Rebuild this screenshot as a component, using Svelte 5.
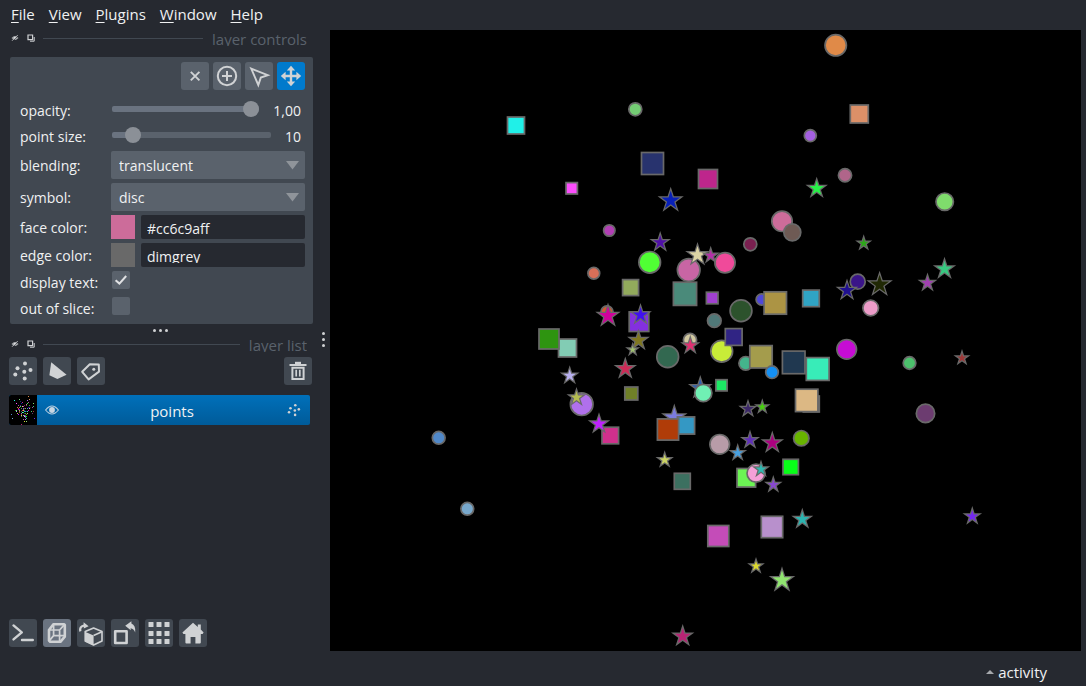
<script>
  let opacity = $state(100);
  let pointSize = $state(10);
  let blending = $state('translucent');
  let symbol = $state('disc');
  let faceColor = $state('#cc6c9aff');
  let edgeColor = $state('dimgrey');
  let displayText = $state(true);
  let outOfSlice = $state(false);

  const menus = ['File', 'View', 'Plugins', 'Window', 'Help'];

  // [shape, centre x, centre y, outer radius, face colour], in paint order
  const points = [
    ['s', 516, 125.5, 9.5, '#20f0e8'], ['c', 635.3, 109.3, 7.5, '#74cc74'],
    ['s', 652.5, 163.5, 12, '#28336e'], ['s', 571.7, 188.3, 6.7, '#fb4dfb'],
    ['t', 670.7, 200.5, 13.8, '#0820b8'], ['c', 609.3, 230.5, 6.7, '#b23fb5'],
    ['t', 660.2, 242.5, 11.4, '#5010a8'], ['c', 835.7, 45.3, 11.7, '#e08a48'],
    ['s', 859.3, 114, 10, '#dc9068'], ['c', 810.3, 135.7, 7, '#a45fe0'],
    ['s', 708, 179, 10.5, '#be268c'], ['t', 816.7, 188.5, 11.8, '#28f048'],
    ['c', 845, 175.3, 7.6, '#b0658a'], ['c', 944.7, 201.7, 9.7, '#7fdc6c'],
    ['c', 782, 221.3, 11.2, '#cc6c9a'], ['c', 792.3, 232.3, 9.5, '#6e5a54'],
    ['c', 750.3, 244.3, 7.5, '#7a2050'], ['t', 863.7, 243.3, 9, '#2ca818'],
    ['c', 649.7, 262.3, 11.8, '#50ff34'], ['c', 593.8, 273.3, 6.9, '#d86f58'],
    ['s', 630.6, 287.6, 9, '#92aa5c'], ['c', 688.7, 270, 12.3, '#c865a4'],
    ['c', 725, 262.7, 11.1, '#f04a9a'], ['t', 697.5, 255, 13, '#dcd4a4'],
    ['t', 710.7, 255.6, 9.8, '#b430a8'], ['s', 685, 293.8, 12.6, '#4a8a7a'],
    ['s', 712.2, 298, 6.8, '#a040d0'], ['c', 607, 311.8, 7, '#d85830'],
    ['t', 608, 316, 13.4, '#d0009c'], ['s', 639, 321.7, 10.8, '#8430e0'],
    ['t', 640.5, 315, 12, '#4010f0'], ['t', 638.5, 340.5, 12, '#807820'],
    ['t', 632.7, 349.8, 8, '#a0c070'], ['c', 690, 340, 7.6, '#d0c8a0'],
    ['t', 690.3, 345.5, 10.7, '#e03070'], ['c', 667.7, 356.7, 11.9, '#326850'],
    ['c', 714.3, 320.7, 7.8, '#507878'], ['s', 567.5, 348, 10, '#82ccb4'],
    ['s', 549, 339, 11, '#2e9410'], ['t', 625.3, 368.7, 12.3, '#cc2c58'],
    ['t', 569.7, 375.7, 10.5, '#b8b0f0'], ['c', 741, 310.7, 11.9, '#2c522c'],
    ['c', 761.7, 299.5, 6.6, '#5048d8'], ['s', 775.3, 303, 12.2, '#ac9444'],
    ['s', 811, 298.4, 9.3, '#30a4c4'], ['c', 857.7, 281.7, 8.5, '#3a1488'],
    ['t', 847, 290.5, 12, '#201090'], ['t', 879.6, 284.7, 14, '#202804'],
    ['c', 870.7, 308, 8.8, '#ec9cc8'], ['c', 721.7, 351.2, 11.9, '#c8ec38'],
    ['s', 733.7, 337, 9.4, '#302484'], ['c', 745.7, 363.3, 7.8, '#44b48c'],
    ['s', 761, 356.8, 12.2, '#a49c4c'], ['c', 772, 372.2, 7.3, '#1490f4'],
    ['s', 793.7, 362.4, 12.3, '#203850'], ['s', 817.7, 369, 12.4, '#38ecb8'],
    ['c', 846.7, 349.3, 10.8, '#c60cd4'], ['t', 944.5, 269, 12.3, '#38c880'],
    ['t', 927.5, 283, 10.5, '#a040b0'], ['t', 962, 358, 9, '#a03838'],
    ['c', 909.5, 363, 7.3, '#4cc06c'], ['c', 925.5, 413.4, 10.2, '#6c3c70'],
    ['c', 581.7, 404.2, 12.3, '#b070ec'], ['t', 576.5, 397.6, 10.5, '#b4bc50'],
    ['s', 631.3, 393.5, 7.5, '#708028'], ['t', 700.3, 388, 13, '#3060b0'],
    ['c', 703.3, 393, 9.6, '#70f0b4'], ['s', 721.5, 385.3, 6.6, '#1ce864'],
    ['s', 610.3, 435.5, 9.3, '#d0308c'], ['t', 599, 424, 11.8, '#c020ff'],
    ['t', 674.3, 417.5, 14, '#7c7ce0'], ['s', 686, 425.5, 9.6, '#3498c4'],
    ['s', 668, 429.5, 11.6, '#b03c08'], ['t', 664.7, 460, 9.7, '#ccd464'],
    ['s', 682.3, 481.3, 9, '#3c7060'], ['t', 748, 409, 10.2, '#3c2868'],
    ['t', 762.3, 407, 8.8, '#48d010'], ['s', 811.3, 404, 9, '#806070'],
    ['s', 806.7, 400.4, 12.2, '#dcb884'], ['c', 719.7, 444.3, 10.8, '#b89ca8'],
    ['t', 750, 440.2, 10.6, '#6030b8'], ['t', 772.3, 443, 12.4, '#ac0080'],
    ['c', 801.3, 438.2, 8.7, '#68b400'], ['t', 737.7, 453, 10, '#48a0e0'],
    ['s', 746.3, 477.8, 10.3, '#6cf454'], ['c', 756, 473.2, 10, '#f4a0d8'],
    ['t', 761, 469.3, 9.8, '#30b8b0'], ['s', 790.7, 467, 8.7, '#08ff18'],
    ['t', 773.3, 484.8, 9.8, '#8848d0'], ['s', 718.3, 536, 11.5, '#c44cb8'],
    ['s', 772, 527, 11.7, '#b890cc'], ['t', 802.3, 519.3, 11.6, '#2cb4b0'],
    ['t', 972.3, 516.4, 10.3, '#7428f0'], ['t', 756, 566.2, 9.3, '#dcd830'],
    ['t', 782, 580.3, 14, '#90e470'], ['t', 682.7, 636.4, 12.3, '#b82474'],
    ['c', 438.7, 437.8, 7.4, '#5088c8'], ['c', 467.3, 508.8, 7.4, '#78a8cc']
  ];

  function star(cx, cy, r) {
    const out = [];
    for (let i = 0; i < 10; i++) {
      const a = -Math.PI / 2 + (i * Math.PI) / 5;
      const k = i % 2 ? r * 0.382 : r;
      out.push((cx + k * Math.cos(a)).toFixed(2) + ',' + (cy + k * Math.sin(a)).toFixed(2));
    }
    return out.join(' ');
  }
  const core = (r) => r - 4;
</script>

{#snippet dockTitle(text)}
  <header class="dock-title">
    <button class="mini" aria-label="hide {text}">
      <svg width="8" height="8" viewBox="0 0 8 8"><path d="M.5 4Q4 .2 7.5 4Q4 7.8 .5 4Z" fill="#a4a7ab" /><circle cx="4" cy="4" r="1.2" fill="#e0e1e3" /><path d="M1.6 7.2L7.2 1.6" stroke="#262930" stroke-width=".8" /><path d="M1 6.8L6.8 1" stroke="#d0d2d4" stroke-width=".8" /></svg>
    </button>
    <button class="mini" aria-label="float {text}">
      <svg width="8" height="8" viewBox="0 0 8 8" fill="none" stroke="#d0d2d4"><path d="M1 1H5.6V5.6H1Z" stroke-width="1.2" /><path d="M3 7.2H7.2V3" /></svg>
    </button>
    <span class="rule"></span>
    <h2>{text}</h2>
  </header>
{/snippet}

{#snippet dots()}
  <g fill="#d0d2d4"><circle cx="16" cy="6.5" r="2" /><circle cx="8.5" cy="11.2" r="2" /><circle cx="6.3" cy="17.4" r="2" /><circle cx="15.3" cy="14.7" r="2" /><circle cx="21.5" cy="13" r="2" /><circle cx="15.7" cy="21.6" r="2" /></g>
{/snippet}

<div class="app">
  <nav class="menubar">
    {#each menus as m}<button><u>{m[0]}</u>{m.slice(1)}</button>{/each}
  </nav>

  <div class="main">
    <aside>
      {@render dockTitle('layer controls')}
      <section class="controls">
        <div class="modes">
          <button class="tool" aria-label="delete selected points"><svg viewBox="0 0 28 28"><path d="M9.8 9.8L18.4 18.4M18.4 9.8L9.8 18.4" stroke="#d0d2d4" stroke-width="1.9" /></svg></button>
          <button class="tool" aria-label="add points"><svg viewBox="0 0 28 28" fill="none" stroke="#d0d2d4" stroke-width="2"><circle cx="14" cy="14" r="9.2" /><path d="M14 9V19M9 14H19" /></svg></button>
          <button class="tool" aria-label="select points"><svg viewBox="0 0 28 28" fill="none" stroke="#d0d2d4" stroke-width="1.9"><path d="M6.2 6.6L22.8 13.2L15.8 15.6L13.3 23Z" /></svg></button>
          <button class="tool on" aria-label="pan and zoom"><svg viewBox="0 0 28 28"><path d="M14 6V22M6 14H22" stroke="#d0d2d4" stroke-width="2.4" /><path d="M14 3.8L18.2 8.6H9.8ZM14 24.2L9.8 19.4H18.2ZM3.8 14L8.6 9.8V18.2ZM24.2 14L19.4 18.2V9.8Z" fill="#d0d2d4" /></svg></button>
        </div>
        <div class="form">
          <label for="opacity">opacity:</label>
          <div class="range">
            <input id="opacity" type="range" min="0" max="100" bind:value={opacity} style="--fill: {opacity}%" />
            <output for="opacity">{(opacity / 100).toFixed(2).replace('.', ',')}</output>
          </div>
          <label for="size">point size:</label>
          <div class="range">
            <input id="size" type="range" min="1" max="100" bind:value={pointSize} style="--fill: {pointSize}%" />
            <output for="size">{pointSize}</output>
          </div>
          <label for="blending">blending:</label>
          <div class="combo">
            <select id="blending" bind:value={blending}><option>translucent</option><option>additive</option><option>opaque</option></select>
            <svg width="13" height="9" viewBox="0 0 13 9"><path d="M0 0H13L6.5 8.5Z" /></svg>
          </div>
          <label for="symbol">symbol:</label>
          <div class="combo">
            <select id="symbol" bind:value={symbol}><option>disc</option><option>square</option><option>star</option></select>
            <svg width="13" height="9" viewBox="0 0 13 9"><path d="M0 0H13L6.5 8.5Z" /></svg>
          </div>
          <label for="face">face color:</label>
          <div class="color"><span class="swatch face"></span><span class="field"><input id="face" type="text" bind:value={faceColor} /></span></div>
          <label for="edge">edge color:</label>
          <div class="color"><span class="swatch edge"></span><span class="field"><input id="edge" type="text" bind:value={edgeColor} /></span></div>
          <label for="text">display text:</label>
          <div class="check">
            <input id="text" type="checkbox" bind:checked={displayText} />
            <svg viewBox="0 0 18 18"><path d="M3.6 9.2L7.4 12.6L14.2 5" fill="none" stroke="#e0e1e3" stroke-width="2" /></svg>
          </div>
          <label for="slice">out of slice:</label>
          <div class="check">
            <input id="slice" type="checkbox" bind:checked={outOfSlice} />
            <svg viewBox="0 0 18 18"><path d="M3.6 9.2L7.4 12.6L14.2 5" fill="none" stroke="#e0e1e3" stroke-width="2" /></svg>
          </div>
        </div>
      </section>
      <div class="hsplit"><i></i><i></i><i></i></div>

      {@render dockTitle('layer list')}
      <div class="toolbar list-tools">
        <button class="tool" aria-label="new points layer"><svg viewBox="0 0 28 28">{@render dots()}</svg></button>
        <button class="tool" aria-label="new shapes layer"><svg viewBox="0 0 28 28"><path d="M8.2 5.2L23.6 17.8L14.4 22L6.4 18.2Z" fill="#d0d2d4" /></svg></button>
        <button class="tool" aria-label="new labels layer"><svg viewBox="0 0 28 28"><path d="M12.8 7.2L21.8 7.6L22 14.6L11.6 22.4L5.2 14.8Z" fill="none" stroke="#d0d2d4" stroke-width="2" stroke-linejoin="round" /><circle cx="16.8" cy="12.2" r="1.5" fill="#d0d2d4" /></svg></button>
        <button class="tool end" aria-label="delete layer"><svg viewBox="0 0 28 28" fill="none" stroke="#d0d2d4"><path d="M5.5 8H22.5" stroke-width="2" /><path d="M11 6H17" stroke-width="2.4" /><path d="M8.4 10.8H19.6V22H8.4Z" stroke-width="2" /><path d="M12.2 12.8V19.6M15.8 12.8V19.6" stroke-width="1.7" /></svg></button>
      </div>
      <div class="layer">
        <svg class="thumb" viewBox="0 0 28 30" shape-rendering="crispEdges">
          {#each points as [, x, y, , fill]}
            <rect x={Math.round((x - 400) / 23)} y={Math.round((y - 30) / 21)} width="1" height="1" {fill} />
          {/each}
        </svg>
        <button class="eye" aria-label="toggle visibility"><svg width="14" height="10" viewBox="0 0 14 10"><path d="M.6 5Q7-3 13.4 5Q7 13 .6 5Z" fill="none" stroke="#b9cfe0" stroke-width="1.1" /><circle cx="7" cy="5" r="2.9" fill="#c8d6e2" /></svg></button>
        <span class="name">points</span>
        <svg class="kind" viewBox="0 0 28 28">{@render dots()}</svg>
      </div>

      <div class="toolbar viewer">
        <button class="tool" aria-label="console"><svg viewBox="0 0 28 28" fill="none" stroke="#d0d2d4" stroke-width="2.4" stroke-linecap="round" stroke-linejoin="round"><path d="M4.5 6.4L12.8 13.4L4.5 20.4M13 21H23.8" /></svg></button>
        <button class="tool lit" aria-label="3D view"><svg viewBox="0 0 28 28" fill="none" stroke="#d0d2d4" stroke-linejoin="round"><path d="M10.4 5.2H21.2L21.8 6V17.6L17.4 22.8H7.2L6 21.6V11Z" stroke-width="2.6" /><path d="M6.2 11H16.6V22.4M16.6 11L21.4 5.6M10.6 5.4V16.6H21.8M10.6 16.6L6.4 21.6" stroke-width="1.7" /></svg></button>
        <button class="tool" aria-label="roll axes"><svg viewBox="0 0 28 28"><path d="M8.2 12.6L16.6 9L25 12.6V22L16.6 26L8.2 22Z" fill="none" stroke="#d0d2d4" stroke-width="1.6" stroke-linejoin="round" /><path d="M8 12.8L16.6 16.4V26.4L8 22.4Z" fill="#d0d2d4" /><path d="M16.6 16.4L25 12.8" stroke="#d0d2d4" stroke-width="1.6" /><path d="M2.2 12.8Q1 6.8 6.6 5.6V3.2L11.6 7.2L6.8 9.4V7.8Q3.8 8.4 4.4 12Z" fill="#d0d2d4" /></svg></button>
        <button class="tool" aria-label="transpose axes"><svg viewBox="0 0 28 28"><path d="M4.2 12.2H15.6V24H4.2Z" fill="none" stroke="#d0d2d4" stroke-width="2.6" stroke-linejoin="round" /><path d="M14.2 6.8L20.4 2.2V4.6Q24.8 6.2 24.2 13.4Q22.8 9.6 19.6 9.2L19.8 11.2Z" fill="#d0d2d4" /></svg></button>
        <button class="tool" aria-label="grid mode"><svg viewBox="0 0 28 28" fill="#d0d2d4">{#each [3, 11, 19] as gx}{#each [3, 12, 20] as gy}<rect x={gx + 0.5} y={gy} width="5" height="5" rx=".6" />{/each}{/each}</svg></button>
        <button class="tool" aria-label="home"><svg viewBox="0 0 28 28"><path d="M14 3.8L18.8 8V5.4H21.8V10.6L24.6 13.4L23.6 15H21.8V23.6Q21.8 24.6 20.8 24.6H16.4V18H11.6V24.6H7.4Q6.4 24.6 6.4 23.6V15H4.4L3.4 13.4Z" fill="#d0d2d4" /></svg></button>
      </div>
    </aside>

    <div class="vsplit"><i></i><i></i><i></i></div>

    <main>
      <svg class="canvas" viewBox="330 30 751 621" role="img" aria-label="points layer">
        {#each points as [shape, x, y, r, fill]}
          {#if shape === 'c'}
            <circle cx={x} cy={y} r={r - 1} {fill} class="edged" />
          {:else if shape === 's'}
            <rect x={x - r + 1} y={y - r + 1} width={2 * r - 2} height={2 * r - 2} {fill} class="edged" />
          {:else}
            <polygon points={star(x, y, r)} fill="#696969" />
            <polygon points={star(x, y, core(r))} {fill} />
          {/if}
        {/each}
      </svg>
    </main>
  </div>

  <footer>
    <button><svg width="8" height="4" viewBox="0 0 8 4"><path d="M0 4L4 0L8 4Z" fill="#a5a8ac" /></svg>activity</button>
  </footer>
</div>

<style>
  :global(body) { margin: 0; background: #262930; }
  .app {
    display: flex; flex-direction: column; min-height: 100vh;
    background: #262930; color: #f0f1f2;
    font: 15px/20px "Open Sans", "Noto Sans", sans-serif;
  }
  .app * { box-sizing: border-box; }
  button, input, select { font: inherit; color: inherit; border: 0; padding: 0; margin: 0; background: none; }
  svg { display: block; }

  .menubar { display: flex; gap: 14px; height: 28px; padding-left: 11px; align-items: center; }
  .menubar u { text-underline-offset: 2px; }
  .main { flex: 1; display: flex; min-height: 0; }
  aside { width: 313px; flex: none; display: flex; flex-direction: column; padding-left: 10px; }

  .dock-title { display: flex; align-items: center; height: 20px; padding: 0 6px 0 1px; }
  .mini { width: 8px; height: 8px; margin-right: 8px; }
  .rule { flex: 1; height: 1px; background: #414851; margin-right: 9px; }
  h2 { align-self: flex-start; margin: 0; font-size: 15px; font-weight: 400; line-height: 22px; height: 18px; overflow: hidden; color: #5a626c; }

  .controls { margin-top: 9px; padding: 5px 8px 5px 10px; background: #414851; border-radius: 2px; font-size: 14px; }
  .modes { display: flex; justify-content: flex-end; gap: 4px; }
  .tool { width: 28px; height: 28px; border-radius: 3px; background: #414851; flex: none; }
  .modes .tool { background: #5a626c; }
  .modes .on { background: #007acc; }
  .tool.lit { background: #6a7380; }
  .tool svg { width: 28px; height: 28px; }

  .form { display: grid; grid-template-columns: 91px minmax(0, 1fr); row-gap: 4px; margin-top: 9px; align-items: center; }
  .form label { white-space: nowrap; padding-top: 2px; }
  .range { display: flex; align-items: center; gap: 14px; height: 22px; padding: 0 4px 0 1px; }
  .range input { flex: 1; min-width: 0; height: 16px; margin-bottom: 2px; appearance: none; }
  .range input::-webkit-slider-runnable-track {
    height: 6px; border-radius: 2px;
    background: linear-gradient(to right, #6a7380 var(--fill), #5a626c var(--fill));
  }
  .range input::-webkit-slider-thumb { appearance: none; width: 16px; height: 16px; margin-top: -5px; border-radius: 50%; background: #8b9097; }
  .range output { text-align: right; padding-top: 2px; }

  .combo { display: grid; align-items: center; }
  .combo select, .combo svg { grid-area: 1 / 1; }
  .combo select { appearance: none; width: 100%; height: 28px; padding: 1px 8px 0; background: #5a626c; border-radius: 2px; }
  .combo svg { justify-self: end; margin-right: 6px; fill: #8f949a; pointer-events: none; }

  .color { display: flex; gap: 6px; height: 24px; }
  .swatch { width: 24px; }
  .face { background: #cc6c9a; }
  .edge { background: #696969; }
  .field { flex: 1; min-width: 0; background: #262930; border-radius: 2px; }
  .field input { display: block; width: 100%; height: 24px; padding: 3px 6px 0; clip-path: inset(0 0 4px 0); }

  .check { display: grid; width: 18px; height: 22px; margin-left: 1px; align-items: start; }
  .check input, .check svg { grid-area: 1 / 1; width: 18px; height: 18px; }
  .check input { appearance: none; background: #5a626c; border-radius: 2px; }
  .check svg { visibility: hidden; pointer-events: none; }
  .check input:checked + svg { visibility: visible; }

  .hsplit { display: flex; justify-content: center; align-items: center; gap: 3px; height: 10px; padding: 2px 3px 0 0; }
  .vsplit { width: 17px; flex: none; display: flex; flex-direction: column; align-items: center; justify-content: center; gap: 3px; padding-left: 3px; }
  .hsplit i, .vsplit i { width: 3px; height: 3px; flex: none; border-radius: 50%; background: #d0d2d4; }

  .toolbar { display: flex; gap: 6px; margin-left: -1px; }
  .list-tools { margin-top: 3px; padding-right: 1px; }
  .end { margin-left: auto; }
  .layer {
    display: flex; align-items: center; height: 30px; margin: 10px 3px 0 -1px;
    background: linear-gradient(#0070ba, #005b99); border-radius: 2px; overflow: hidden;
  }
  .thumb { width: 28px; height: 30px; background: #000; }
  .eye { margin-left: 8px; }
  .name { flex: 1; text-align: center; padding-top: 2px; }
  .kind { width: 18px; height: 18px; margin-right: 7px; }
  .viewer { margin-top: auto; margin-bottom: 4px; }

  main { flex: 1; min-width: 0; margin: 2px 5px 0 0; background: #000; }
  .canvas { width: 100%; height: 100%; }
  .edged { stroke: #696969; stroke-width: 1.7; }

  footer { display: flex; justify-content: flex-end; align-items: center; height: 35px; padding: 6px 39px 0 0; }
  footer button { display: flex; align-items: center; gap: 4px; }
</style>
